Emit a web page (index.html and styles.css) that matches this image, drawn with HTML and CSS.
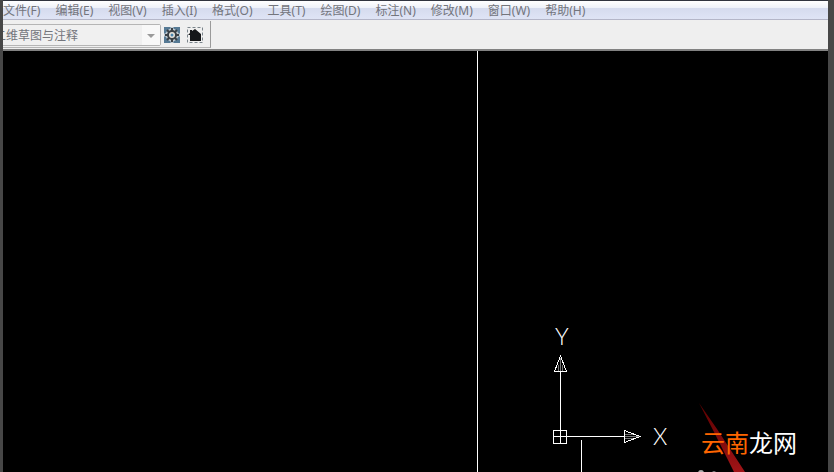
FILE: index.html
```html
<!DOCTYPE html>
<html lang="zh-CN">
<head>
<meta charset="utf-8">
<title>二维草图与注释</title>
<link rel="stylesheet" href="styles.css">
</head>
<body>
<div class="window">
  <nav class="menu" aria-label="菜单">
    <button>文件(F)</button><button>编辑(E)</button><button>视图(V)</button><button>插入(I)</button><button>格式(O)</button><button>工具(T)</button><button>绘图(D)</button><button>标注(N)</button><button>修改(M)</button><button>窗口(W)</button><button>帮助(H)</button>
  </nav>
  <div class="toolbar">
    <div class="panel">
      <div class="combo">
        <select aria-label="工作空间"><option>二维草图与注释</option></select>
        <svg class="arrow" viewBox="0 0 18 20" aria-hidden="true"><path d="M5 9h8l-4 4z"/></svg>
      </div>
      <button class="tool" aria-label="工作空间设置">
        <svg viewBox="0 0 16 16">
          <path fill="#557994" d="M0 0h16v16H0z"/>
          <circle cx="8" cy="8" r="6.500" fill="#c3ccd2"/>
          <path stroke="#c3ccd2" stroke-width="3" d="M8 0v16M0 8h16"/>
          <path stroke="#3a4046" stroke-width="2" d="M8 1v14M1 8h14M3 3l10 10M13 3L3 13"/>
          <circle cx="8" cy="8" r="4" fill="#e8e4dc" stroke="#3a4046" stroke-width="2"/>
          <circle cx="8" cy="8" r="1.500" fill="#4b85ad"/>
        </svg>
      </button>
      <button class="tool" aria-label="我的工作空间">
        <svg viewBox="0 0 16 16">
          <path stroke="#7a848b" stroke-dasharray="3 2" fill="none" d="M.5.5h15v15H.5z"/>
          <path fill="#151719" d="M1 8l2-2V3h2v1l3-2 6 5v7H3V8z"/>
        </svg>
      </button>
    </div>
  </div>
  <main class="drawing">
    <svg class="lines" width="825" height="421" aria-label="坐标系">
      <g fill="none" stroke="#fff" shape-rendering="crispEdges">
        <path d="M474.500 0V421M578.500 389V421M557.500 321V392M550.500 379.500h13v13h-13zM550.500 385.500H621"/>
        <path d="M557.500 305L551.500 320.500H563.500ZM637 385.500L621.500 379.500V391.500Z"/>
      </g>
      <path class="hatch" d="M555.500 314V320M557.500 307V320M559.500 314V320M622 383.500H630M622 385.500H636M622 387.500H630"/>
      <text class="axis" x="552" y="294">Y</text>
      <text class="axis" x="650" y="394">X</text>
    </svg>
    <div class="brand">
      <svg class="slash" width="60" height="70" viewBox="0 0 60 70" aria-hidden="true">
        <defs><linearGradient id="red" x2="0" y2="1"><stop stop-color="#5a0000"/><stop offset="1" stop-color="#a01417"/></linearGradient></defs>
        <path fill="url(#red)" d="M4 1L22 27L50 70H39L19 30Z"/>
        <circle cx="6" cy="71" r="3" fill="#aaa"/><circle cx="19" cy="71" r="2" fill="#777"/>
      </svg>
      <span class="name"><b>云南</b>龙网</span>
    </div>
  </main>
</div>
</body>
</html>
```
FILE: styles.css
```css
* { box-sizing: border-box; }
body { margin: 0; background: #474747; font: 12px/18px "Noto Sans", "Noto Sans CJK SC", sans-serif; color: #73757c; }
.window { display: flex; flex-direction: column; height: 100vh; margin: 0 6px 0 3px; overflow: hidden; background: #efefef; border-top: 1px solid #30343f; }
button { font: inherit; color: inherit; padding: 0; border: 0; background: none; white-space: nowrap; }
.menu { display: flex; align-items: flex-start; gap: 15px; height: 19px; border-bottom: 1px solid #b4b6c8; background: linear-gradient(#fff, #eef1f9 7px, #d5dbee 7px, #dfe4f5); }
.menu button { padding-top: 1px; }
.toolbar { display: flex; height: 31px; border-bottom: 2px solid #828282; background: #efefef; }
.panel { display: flex; align-items: center; gap: 7px; height: 27px; margin-top: 1px; padding: 2px 7px 0 0; border-right: 1px solid #9a9a9a; border-bottom: 1px solid #b5b5b5; }
.combo { position: relative; width: 170px; height: 22px; margin-left: -12px; margin-right: -4px; }
.combo select { appearance: none; width: 100%; height: 100%; padding: 1px 20px 0 2px; border: 1px solid #b5b5b5; border-radius: 2px; background: #f0f0f0; font: inherit; color: inherit; }
.arrow { position: absolute; right: 1px; top: 1px; width: 18px; height: 20px; background: #f8f8f8; fill: #9a9a9a; pointer-events: none; }
.tool, .tool svg { display: block; width: 16px; height: 16px; }
.drawing { position: relative; flex: 1; overflow: hidden; background: #000; }
.lines { position: absolute; left: 0; top: 0; }
.hatch { fill: none; stroke: #777; }
.axis { font: 300 23px Lato, "Noto Sans CJK SC", sans-serif; fill: #fff; }
.brand { position: absolute; right: 31px; bottom: 0; width: 102px; height: 70px; }
.slash { position: absolute; left: 0; top: 0; }
.name { position: absolute; left: 6px; top: 23px; font: 400 24px/34px "Noto Sans CJK SC", sans-serif; color: #fff; white-space: nowrap; }
.name b { font-weight: 400; color: #f60; }
```
